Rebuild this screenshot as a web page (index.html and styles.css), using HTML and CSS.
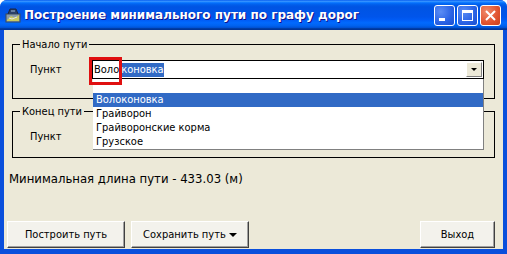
FILE: index.html
```html
<!DOCTYPE html>
<html lang="ru">
<head>
  <meta charset="UTF-8" />
  <title>Построение минимального пути по графу дорог</title>
  <link rel="stylesheet" href="styles.css">
</head>
<body>
  <div class="window">
    <div class="titlebar">
      <svg class="app-icon" width="16" height="16" viewBox="0 0 16 16">
        <rect x="1" y="7" width="14" height="8" fill="#8a9aa8" stroke="#3b4a5a" stroke-width="1"/>
        <path d="M2 13 L6 9 L10 11 L14 8 L14 14 L2 14 Z" fill="#c8c860"/>
        <path d="M3 7 L5 2 L11 2 L13 7" fill="#2b3f66" stroke="#1a2440" stroke-width="1"/>
        <path d="M6 4 L10 4" stroke="#9fb8d8" stroke-width="1"/>
        <path d="M4 11 L7 12 L12 10" stroke="#e8e8e8" stroke-width="1" fill="none"/>
      </svg>
      <span class="title">Построение минимального пути по графу дорог</span>
      <div class="caption-buttons">
        <span class="cap-btn">
          <svg width="21" height="21" viewBox="0 0 21 21"><rect x="5" y="13" width="6" height="3" fill="#fff"/></svg>
        </span>
        <span class="cap-btn">
          <svg width="21" height="21" viewBox="0 0 21 21"><rect x="5.5" y="5.5" width="10" height="10" fill="none" stroke="#fff" stroke-width="1"/><rect x="5" y="5" width="11" height="3" fill="#fff"/></svg>
        </span>
        <span class="cap-btn cap-close">
          <svg width="21" height="21" viewBox="0 0 21 21"><path d="M6 6 L15 15 M15 6 L6 15" stroke="#fff" stroke-width="2"/></svg>
        </span>
      </div>
    </div>

    <div class="client">
      <fieldset class="group group-start">
        <legend>Начало пути</legend>
        <div class="field">
          <span class="field-label">Пункт</span>
          <div class="combo">
            <span class="combo-text"><span class="typed">Воло</span><span class="selected">коновка</span></span>
            <span class="combo-arrow"></span>
            <ul class="dropdown">
              <li class="blank"></li>
              <li class="active">Волоконовка</li>
              <li>Грайворон</li>
              <li>Грайворонские корма</li>
              <li>Грузское</li>
            </ul>
            <span class="mark"></span>
          </div>
        </div>
      </fieldset>

      <fieldset class="group group-end">
        <legend>Конец пути</legend>
        <div class="field">
          <span class="field-label">Пункт</span>
        </div>
      </fieldset>

      <p class="result">Минимальная длина пути - 433.03 (м)</p>

      <div class="actions">
        <button class="btn btn-wide">Построить путь</button>
        <button class="btn btn-wide">Сохранить путь <span class="caret"></span></button>
        <button class="btn btn-exit">Выход</button>
      </div>
    </div>
  </div>
</body>
</html>
```

FILE: styles.css
```css
* {
  box-sizing: border-box;
}

body {
  margin: 0;
  background: #fff;
  font-family: "DejaVu Sans Condensed", "DejaVu Sans", sans-serif;
  font-stretch: condensed;
  font-size: 11px;
  color: #000;
}

.window {
  width: 507px;
  height: 254px;
  display: flex;
  flex-direction: column;
  background: #0a4fdc;
  border-radius: 7px 7px 0 0;
  overflow: hidden;
}

.titlebar {
  height: 30px;
  display: flex;
  align-items: center;
  padding: 0 6px 0 5px;
  background: linear-gradient(to bottom, #0058ee 0%, #3a93ff 4%, #288eff 6%, #127dff 8%, #036ffc 10%, #0262ee 14%, #0057e5 20%, #0054e3 24%, #0055eb 56%, #005bf5 66%, #026afe 76%, #0062ef 86%, #0052d6 92%, #0040ab 94%, #003092 100%);
}

.app-icon {
  flex: none;
  margin-right: 3px;
}

.title {
  flex: 1;
  color: #fff;
  font-family: "DejaVu Sans", sans-serif;
  font-stretch: normal;
  font-weight: bold;
  font-size: 12px;
  text-shadow: 1px 1px #0f1089;
  white-space: nowrap;
}

.caption-buttons {
  display: flex;
  gap: 2px;
}

.cap-btn {
  width: 21px;
  height: 21px;
  border: 1px solid #fff;
  border-radius: 3px;
  background: radial-gradient(circle at 30% 30%, #5b8df5 0%, #2a62e4 60%, #1a4fd0 100%);
  display: flex;
  align-items: center;
  justify-content: center;
}

.cap-btn svg {
  margin: -1px;
}

.cap-close {
  background: radial-gradient(circle at 30% 30%, #f08a6a 0%, #e0532f 60%, #c8401e 100%);
}

.client {
  flex: 1;
  margin: 0 4px 5px 4px;
  background: #ece9d8;
  display: flex;
  flex-direction: column;
  padding-bottom: 1px;
}

.group {
  margin: 8px 8px 0 8px;
  padding: 9px 0 15px 0;
  border: 1px solid #000;
  min-width: 0;
}

.group-start {
  padding-bottom: 19px;
}

.group-end {
  margin-top: 6px;
  padding-bottom: 11px;
}

.group legend {
  padding: 0 2px;
  margin-left: 7px;
  line-height: 13px;
}

.field {
  display: flex;
  align-items: center;
  height: 19px;
  padding-left: 17px;
}

.field-label {
  width: 62px;
  flex: none;
}

.combo {
  position: relative;
  width: 392px;
  height: 19px;
  border: 1px solid #000;
  background: #fff;
  display: flex;
  align-items: center;
}

.combo-text {
  flex: 1;
  display: flex;
  height: 17px;
}

.typed {
  padding: 0 1px 0 1px;
  border-right: 1px solid #000;
  line-height: 17px;
}

.selected {
  background: #316ac5;
  color: #fff;
  line-height: 14px;
  margin-top: 2px;
  height: 14px;
}

.combo-arrow {
  width: 16px;
  height: 15px;
  margin-right: 1px;
  background: #ece9d8;
  border: 1px solid;
  border-color: #fff #808080 #808080 #fff;
  display: flex;
  align-items: center;
  justify-content: center;
}

.combo-arrow::after {
  content: "";
  border-left: 3px solid transparent;
  border-right: 3px solid transparent;
  border-top: 3px solid #000;
}

.dropdown {
  position: absolute;
  top: 18px;
  left: 0;
  width: 391px;
  margin: 0;
  padding: 0;
  list-style: none;
  background: #fff;
  border-right: 1px solid #808080;
  border-bottom: 1px solid #808080;
  z-index: 2;
}

.dropdown li {
  height: 14px;
  line-height: 14px;
  padding-left: 3px;
}

.dropdown li.active {
  background: #316ac5;
  color: #fff;
}

.mark {
  position: absolute;
  left: -4px;
  top: -4px;
  width: 33px;
  height: 28px;
  border: 3px solid #e01010;
  z-index: 3;
}

.result {
  margin: 13px 0 0 5px;
  font-size: 13px;
  line-height: 16px;
}

.actions {
  margin-top: auto;
  display: flex;
  padding: 0 8px 0 3px;
  gap: 6px;
}

.btn {
  height: 27px;
  font: inherit;
  font-size: 11px;
  background: #f3f2ec;
  border: 1px solid;
  border-color: #fff #404040 #404040 #fff;
  box-shadow: inset -1px -1px #a0a0a0;
  padding: 0;
  color: #000;
}

.btn-wide {
  width: 118px;
}

.btn-exit {
  width: 75px;
  margin-left: auto;
}

.caret {
  display: inline-block;
  vertical-align: middle;
  border-left: 4px solid transparent;
  border-right: 4px solid transparent;
  border-top: 4px solid #000;
}
```
